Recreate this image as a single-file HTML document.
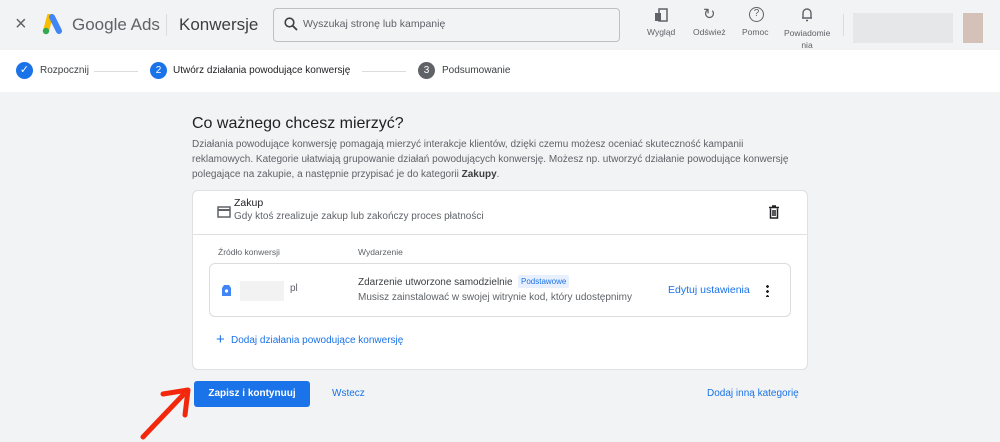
<!DOCTYPE html>
<html><head><meta charset="utf-8"><style>
*{margin:0;padding:0;box-sizing:border-box}
body{width:1000px;height:442px;overflow:hidden;background:#f1f3f4;font-family:"Liberation Sans",Arial,sans-serif;color:#3c4043;position:relative}
.a{position:absolute;white-space:nowrap}
</style></head><body>
<div class="a" style="left:0;top:0;width:1000px;height:50px;background:#f1f3f4"></div>
<div class="a" style="left:15px;top:13px;font-size:20px;color:#5f6368">×</div>
<svg class="a" style="left:42px;top:14px" width="22" height="21" viewBox="0 0 22 21"><path d="M8 2 L4 17" stroke="#fbbc04" stroke-width="6" stroke-linecap="round"/><path d="M10 3 L17 17" stroke="#4285f4" stroke-width="6" stroke-linecap="round"/><circle cx="4" cy="17" r="3.2" fill="#34a853"/></svg>
<div class="a" style="left:72px;top:15px;font-size:17px;color:#5f6368">Google Ads</div>
<div class="a" style="left:166px;top:14px;width:1px;height:22px;background:#dadce0"></div>
<div class="a" style="left:179px;top:15px;font-size:17px;color:#3c4043">Konwersje</div>
<div class="a" style="left:273px;top:8px;width:347px;height:34px;border:1px solid #bdc1c6;border-radius:4px;background:#f1f3f4"></div>
<svg class="a" style="left:284px;top:17px" width="14" height="14" viewBox="0 0 14 14"><circle cx="5.5" cy="5.5" r="4.3" fill="none" stroke="#3c4043" stroke-width="1.6"/><path d="M8.7 8.7 L13 13" stroke="#3c4043" stroke-width="1.8"/></svg>
<div class="a" style="left:303px;top:18px;font-size:10.5px;color:#5f6368">Wyszukaj stronę lub kampanię</div>
<svg class="a" style="left:654px;top:8px" width="14" height="14"><rect x="1" y="5" width="6" height="8" fill="#5f6368"/><rect x="5" y="1" width="8" height="12" fill="none" stroke="#5f6368" stroke-width="1.5"/></svg>
<div class="a" style="left:647px;top:27px;font-size:8.5px;color:#5f6368">Wygląd</div>
<div class="a" style="left:703px;top:5px;font-size:15px;color:#5f6368">↻</div>
<div class="a" style="left:693px;top:27px;font-size:8.5px;color:#5f6368">Odśwież</div>
<div class="a" style="left:749px;top:7px;width:15px;height:15px;border:1.5px solid #5f6368;border-radius:50%;font-size:10px;text-align:center;line-height:12px;color:#5f6368">?</div>
<div class="a" style="left:742px;top:27px;font-size:8.5px;color:#5f6368">Pomoc</div>
<svg class="a" style="left:801px;top:7px" width="12" height="15"><path d="M2 11 V6 a4 4 0 0 1 8 0 V11 Z M1 11 H11 M5 13.5 H7" fill="none" stroke="#5f6368" stroke-width="1.4"/></svg>
<div class="a" style="left:784px;top:27px;font-size:8.5px;color:#5f6368;text-align:center;line-height:12px;width:46px;white-space:normal">Powiadomie nia</div>
<div class="a" style="left:843px;top:14px;width:1px;height:22px;background:#dadce0"></div>
<div class="a" style="left:853px;top:13px;width:100px;height:30px;background:#e6e7e9"></div>
<div class="a" style="left:963px;top:13px;width:20px;height:30px;background:#d4c1b8"></div>
<div class="a" style="left:0;top:50px;width:1000px;height:42px;background:#fff"></div>
<div class="a" style="left:16px;top:62px;width:17px;height:17px;border-radius:50%;background:#1a73e8;color:#fff;font-size:11px;text-align:center;line-height:17px">✓</div>
<div class="a" style="left:40px;top:65px;font-size:10px">Rozpocznij</div>
<div class="a" style="left:94px;top:71px;width:44px;height:1px;background:#dadce0"></div>
<div class="a" style="left:150px;top:62px;width:17px;height:17px;border-radius:50%;background:#1a73e8;color:#fff;font-size:10px;text-align:center;line-height:17px">2</div>
<div class="a" style="left:173px;top:65px;font-size:10px;color:#202124">Utwórz działania powodujące konwersję</div>
<div class="a" style="left:362px;top:71px;width:44px;height:1px;background:#dadce0"></div>
<div class="a" style="left:418px;top:62px;width:17px;height:17px;border-radius:50%;background:#5f6368;color:#fff;font-size:10px;text-align:center;line-height:17px">3</div>
<div class="a" style="left:442px;top:65px;font-size:10px">Podsumowanie</div>
<div class="a" style="left:192px;top:115px;font-size:16px;color:#202124">Co ważnego chcesz mierzyć?</div>
<div class="a" style="left:192px;top:137px;width:610px;font-size:10px;line-height:15px;color:#5f6368;white-space:normal">Działania powodujące konwersję pomagają mierzyć interakcje klientów, dzięki czemu możesz oceniać skuteczność kampanii reklamowych. Kategorie ułatwiają grupowanie działań powodujących konwersję. Możesz np. utworzyć działanie powodujące konwersję polegające na zakupie, a następnie przypisać je do kategorii <b style="color:#3c4043">Zakupy</b>.</div>
<div class="a" style="left:192px;top:190px;width:616px;height:180px;background:#fff;border:1px solid #e0e0e0;border-radius:6px"></div>
<svg class="a" style="left:217px;top:206px" width="14" height="12"><rect x="1" y="1" width="12" height="10" fill="none" stroke="#5f6368" stroke-width="1.5"/><rect x="1" y="3" width="12" height="2" fill="#5f6368"/></svg>
<div class="a" style="left:234px;top:197px;font-size:10.5px;color:#202124">Zakup</div>
<div class="a" style="left:234px;top:211px;font-size:10px;color:#5f6368">Gdy ktoś zrealizuje zakup lub zakończy proces płatności</div>
<svg class="a" style="left:768px;top:205px" width="12" height="14"><path d="M1 2.5H11M4 1H8M2.5 3.5V13H9.5V3.5M5 5V11M7 5V11" fill="none" stroke="#202124" stroke-width="1.5"/></svg>
<div class="a" style="left:193px;top:234px;width:614px;height:1px;background:#e0e0e0"></div>
<div class="a" style="left:218px;top:247px;font-size:8.5px;color:#5f6368">Źródło konwersji</div>
<div class="a" style="left:358px;top:247px;font-size:8.5px;color:#5f6368">Wydarzenie</div>
<div class="a" style="left:209px;top:263px;width:582px;height:54px;border:1px solid #dadce0;border-radius:6px"></div>
<svg class="a" style="left:221px;top:282px" width="11" height="15"><path d="M3 3 H8 L10 6 V14 H1 V6 Z" fill="#4285f4"/><circle cx="5.5" cy="9" r="1.6" fill="#fff"/></svg>
<div class="a" style="left:240px;top:281px;width:44px;height:20px;background:#f2f2f3"></div>
<div class="a" style="left:290px;top:283px;font-size:10px;color:#5f6368">pl</div>
<div class="a" style="left:358px;top:277px;font-size:10px;color:#3c4043">Zdarzenie utworzone samodzielnie</div>
<div class="a" style="left:518px;top:275px;padding:2px 3px;background:#e8f0fe;color:#1a73e8;font-size:8px;border-radius:2px">Podstawowe</div>
<div class="a" style="left:358px;top:292px;font-size:10px;color:#5f6368">Musisz zainstalować w swojej witrynie kod, który udostępnimy</div>
<div class="a" style="left:668px;top:284px;font-size:10.5px;color:#1a73e8">Edytuj ustawienia</div>
<div class="a" style="left:766px;top:284px;width:3px;height:13px;background:radial-gradient(circle,#202124 1.3px,transparent 1.5px) 0 0/3px 5px"></div>
<div class="a" style="left:216px;top:332px;font-size:15px;color:#1a73e8;line-height:15px">+</div>
<div class="a" style="left:231px;top:335px;font-size:10px;color:#1a73e8">Dodaj działania powodujące konwersję</div>
<div class="a" style="left:194px;top:381px;width:116px;height:26px;background:#1a73e8;border-radius:3px;color:#fff;font-size:10px;font-weight:bold;text-align:center;line-height:26px">Zapisz i kontynuuj</div>
<div class="a" style="left:332px;top:388px;font-size:10px;color:#1a73e8">Wstecz</div>
<div class="a" style="left:707px;top:388px;font-size:10px;color:#1a73e8">Dodaj inną kategorię</div>
<svg class="a" style="left:135px;top:385px" width="60" height="57"><path d="M8 52 L48 10" stroke="#f2270c" stroke-width="5" stroke-linecap="round"/><path d="M28 9 L53 5 L50 30" fill="none" stroke="#f2270c" stroke-width="5" stroke-linecap="round" stroke-linejoin="round"/></svg>
</body></html>
